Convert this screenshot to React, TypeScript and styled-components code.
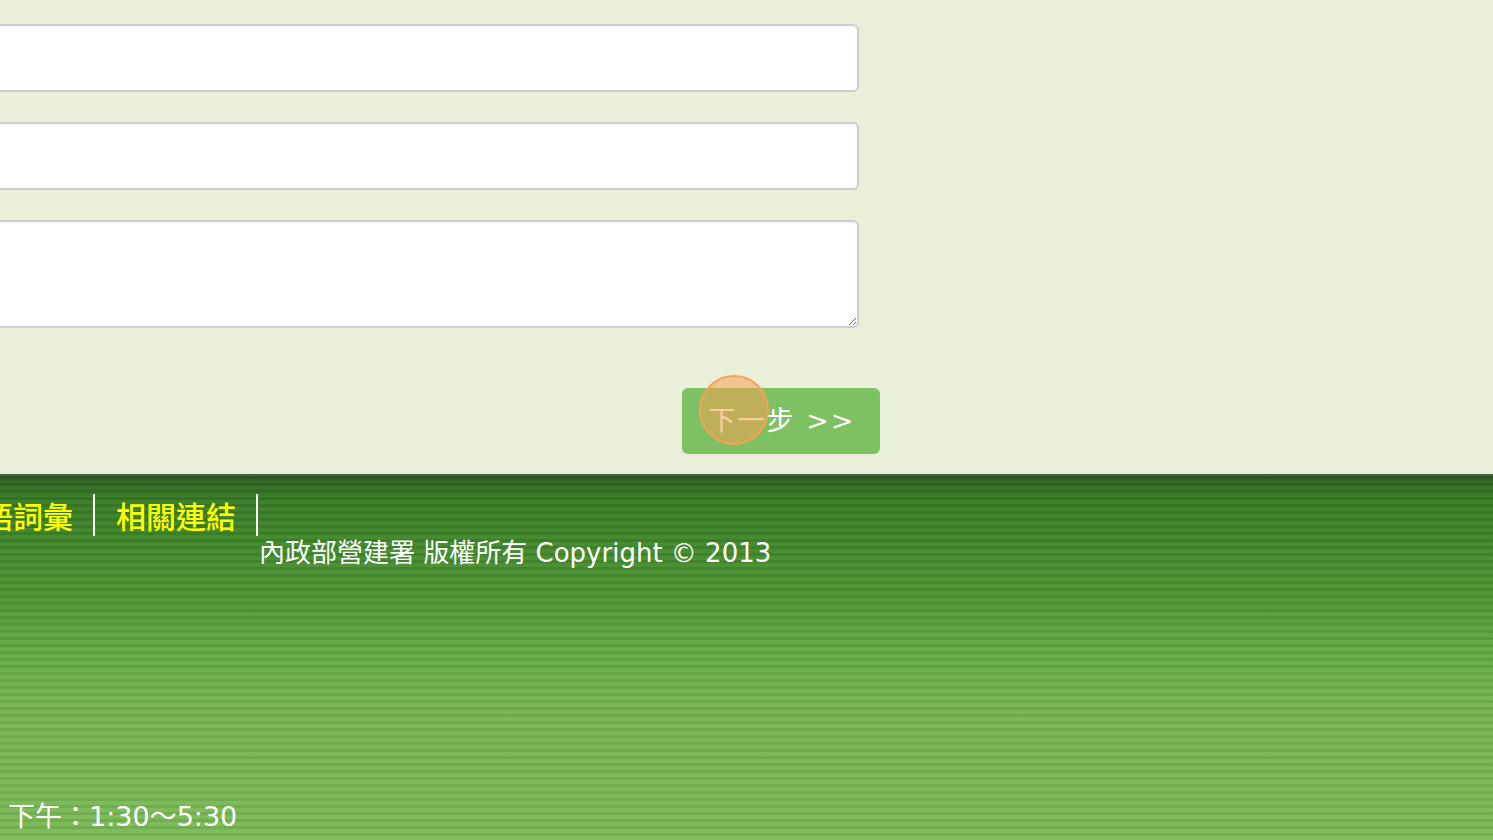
import React from "react";
import styled, { createGlobalStyle } from "styled-components";

const Global = createGlobalStyle`
  html, body {
    margin: 0;
    padding: 0;
    overflow: hidden;
  }
  body {
    background: #7bb955;
    font-family: "DejaVu Sans", "Noto Sans CJK TC", sans-serif;
  }
`;

const Page = styled.div`
  display: flex;
  flex-direction: column;
  min-height: 840px;
`;

const FormArea = styled.div`
  background: #eaefd9;
  padding: 24px 0 20px 0;
`;

const Form = styled.form`
  display: flex;
  flex-direction: column;
  margin-left: -200px;
  width: 1080px;
`;

const Field = styled.input`
  box-sizing: border-box;
  width: calc(100% - 21px);
  height: 68px;
  margin-bottom: 30px;
  border: 2px solid #cdcdcd;
  border-radius: 6px;
  background: #fff;
  box-shadow: inset 0 2px 2px rgba(0, 0, 0, 0.04);
  outline: none;
`;

const Area = styled.textarea`
  box-sizing: border-box;
  width: calc(100% - 21px);
  height: 108px;
  border: 2px solid #cdcdcd;
  border-radius: 6px;
  background: #fff;
  box-shadow: inset 0 2px 2px rgba(0, 0, 0, 0.04);
  resize: both;
  outline: none;
`;

const ButtonRow = styled.div`
  display: flex;
  justify-content: flex-end;
  margin-top: 60px;
`;

const NextButton = styled.button`
  position: relative;
  width: 198px;
  height: 66px;
  border: 0;
  border-radius: 6px;
  background: #7dc163;
  color: #fff;
  font-family: "DejaVu Sans", "Noto Sans CJK TC", sans-serif;
  font-size: 27px;
  letter-spacing: 2px;
  padding: 0 0 5px 2px;
  cursor: pointer;
`;

const ClickMark = styled.span`
  position: absolute;
  left: 17px;
  top: -13px;
  width: 66px;
  height: 66px;
  border: 2.5px solid #f4a455;
  border-radius: 50%;
  background: rgba(247, 160, 82, 0.55);
  pointer-events: none;
`;

const Footer = styled.footer`
  flex: 1;
  border-top: 2px solid #4d6148;
  background:
    repeating-linear-gradient(
      to bottom,
      rgba(0, 0, 0, 0.07) 0px,
      rgba(0, 0, 0, 0.07) 3px,
      rgba(255, 255, 255, 0.03) 3px,
      rgba(255, 255, 255, 0.03) 7px
    ),
    linear-gradient(
      to bottom,
      #2a5a1f 0px,
      #377a25 20px,
      #3f872b 60px,
      #4f9633 120px,
      #66ab46 180px,
      #76b652 230px,
      #7bba56 100%
    );
  display: flex;
  flex-direction: column;
`;

const Nav = styled.nav`
  display: flex;
  margin: 18px 0 0 -47px;
`;

const NavLink = styled.a`
  display: flex;
  align-items: center;
  height: 42px;
  padding: 0 20px 0 21px;
  border-right: 2px solid #fff;
  color: #ffff00;
  font-family: "Noto Sans CJK TC", sans-serif;
  font-size: 30px;
  font-weight: 500;
  text-decoration: none;
  white-space: nowrap;
  &:first-child {
    padding-left: 0;
  }
`;

const Copyright = styled.div`
  margin: 1px 0 0 259px;
  color: #fff;
  font-size: 26px;
  line-height: 32px;
  white-space: nowrap;
`;

const Hours = styled.div`
  margin: auto 0 6px 8px;
  color: #fff;
  font-size: 27px;
  line-height: 34px;
  white-space: nowrap;
`;

export default function App() {
  return (
    <Page>
      <Global />
      <FormArea>
        <Form onSubmit={(e) => e.preventDefault()}>
          <Field type="text" />
          <Field type="text" />
          <Area />
          <ButtonRow>
            <NextButton type="submit">
              下一步 &gt;&gt;
              <ClickMark />
            </NextButton>
          </ButtonRow>
        </Form>
      </FormArea>
      <Footer>
        <Nav>
          <NavLink href="#">用語詞彙</NavLink>
          <NavLink href="#">相關連結</NavLink>
        </Nav>
        <Copyright>內政部營建署 版權所有 Copyright © 2013</Copyright>
        <Hours>下午：1:30～5:30</Hours>
      </Footer>
    </Page>
  );
}
